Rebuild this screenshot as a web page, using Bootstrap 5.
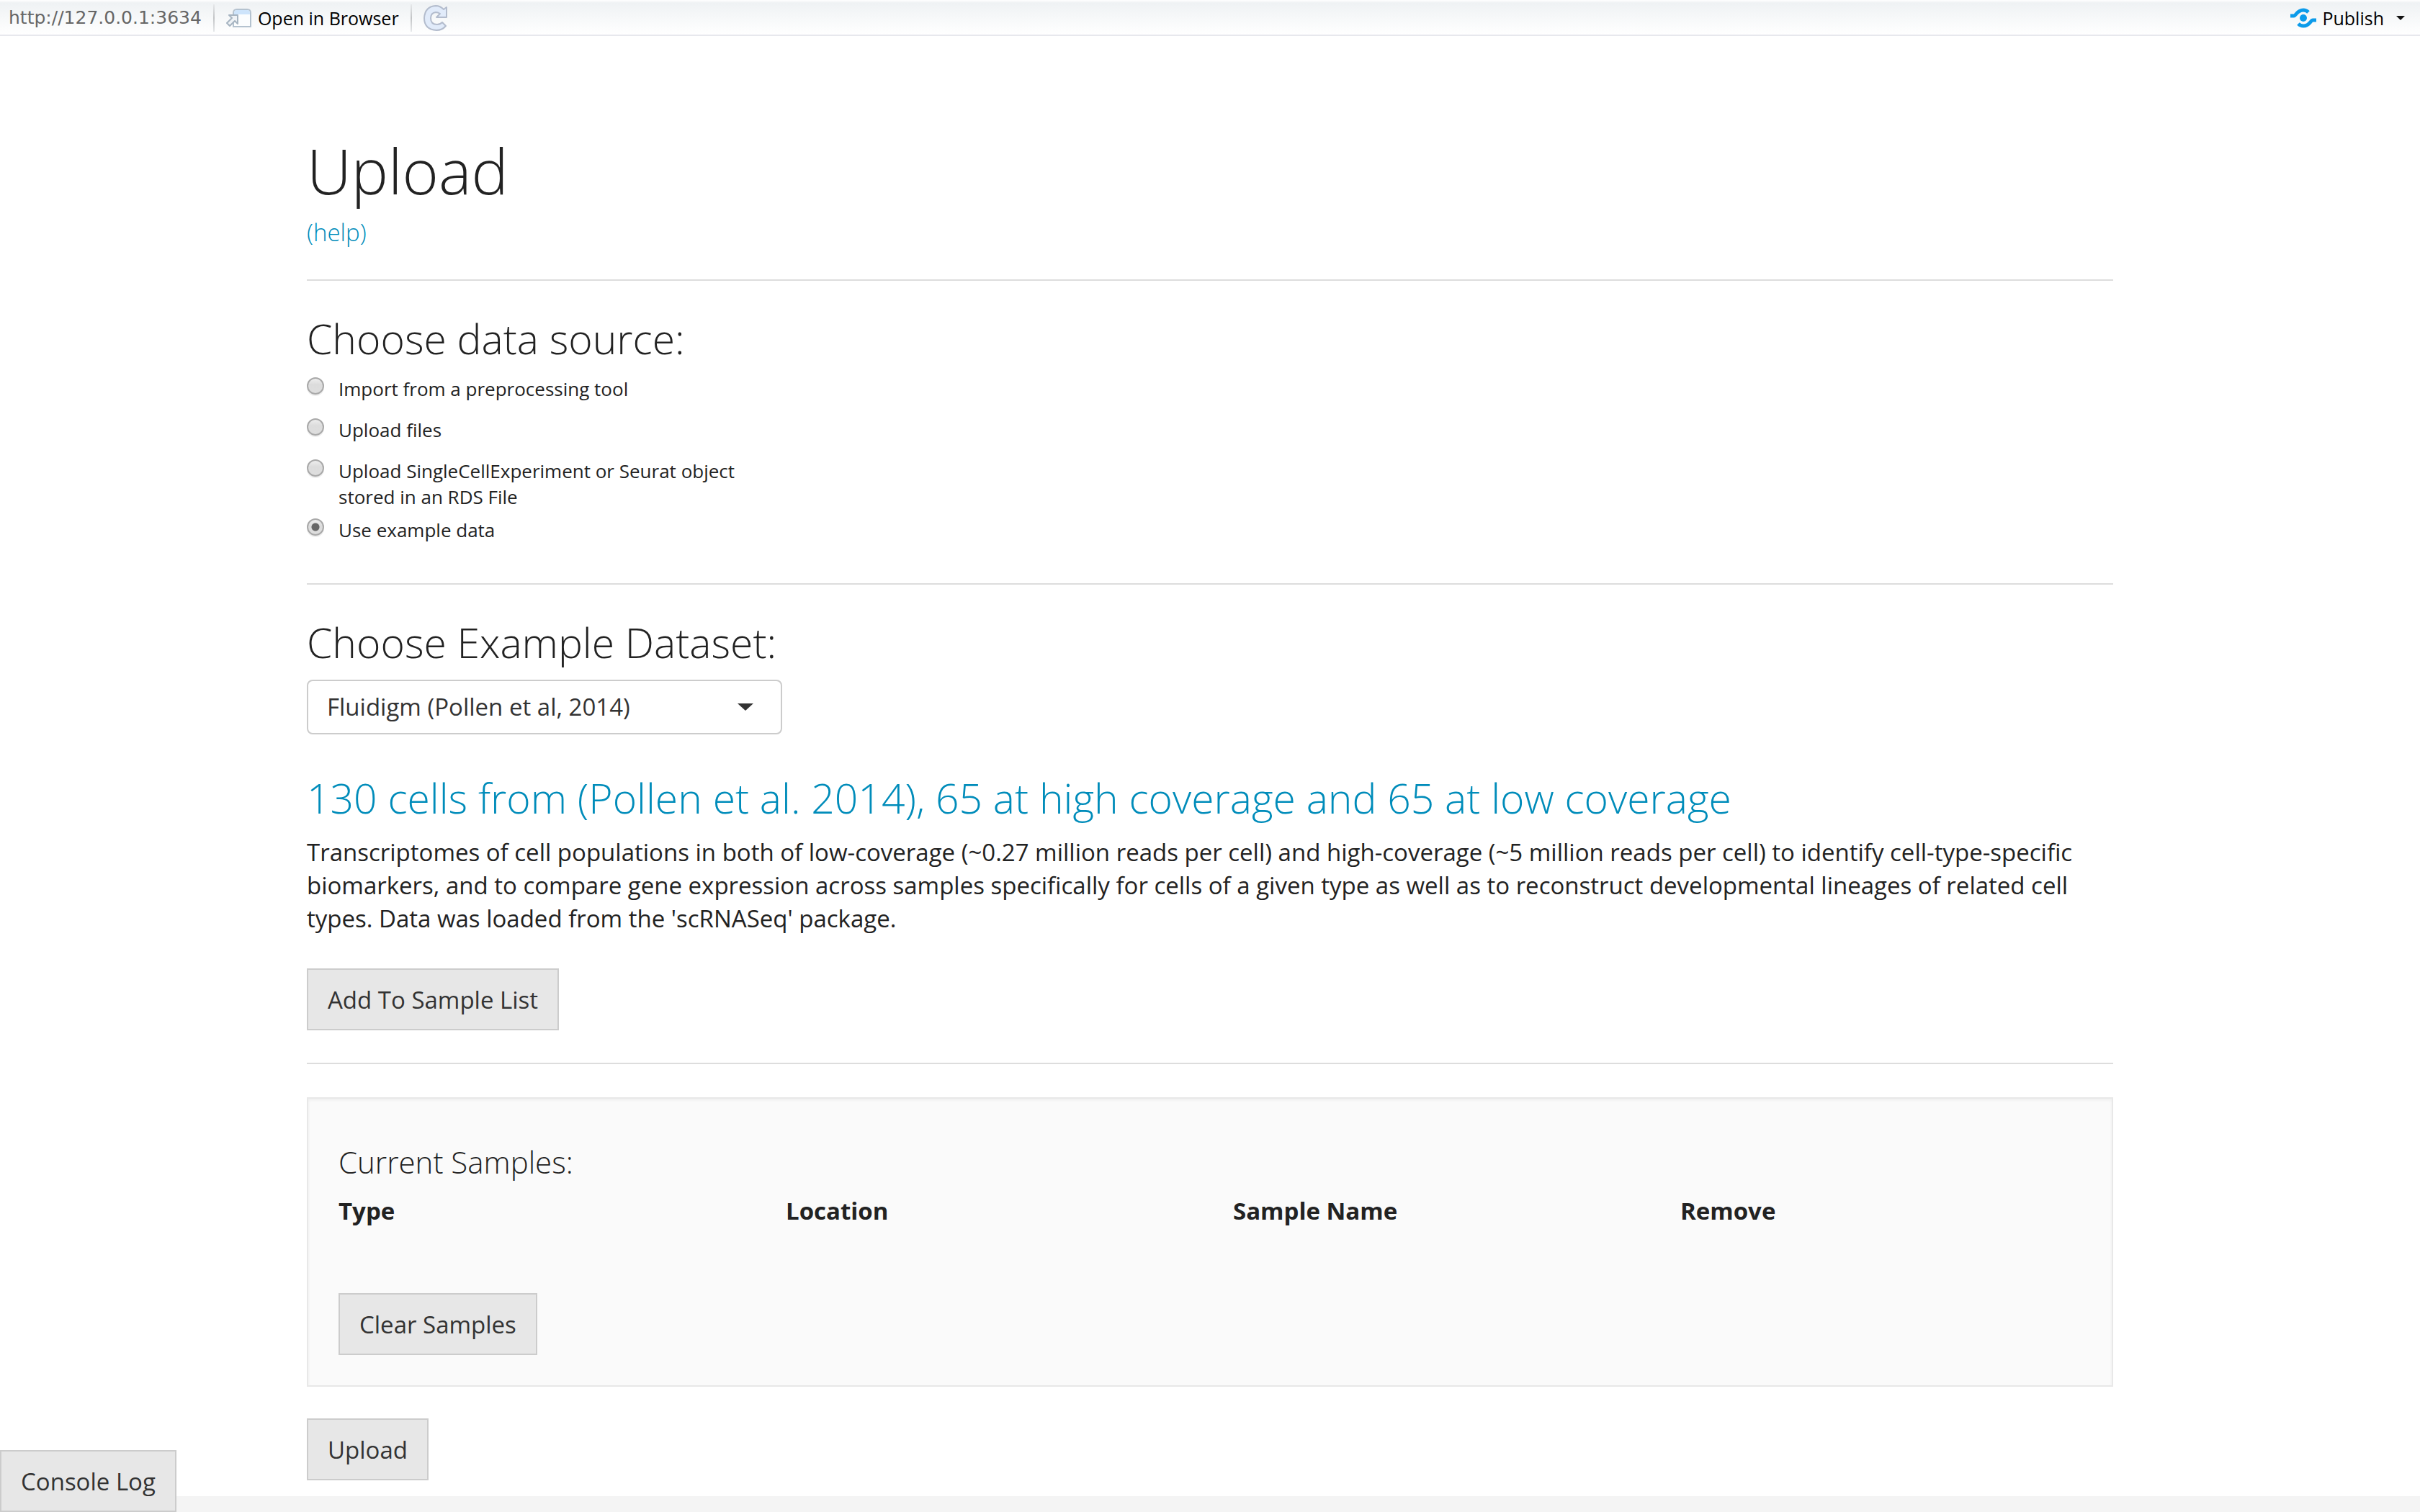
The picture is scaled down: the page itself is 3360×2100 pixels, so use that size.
<!DOCTYPE html>
<html lang="en">
<head>
<meta charset="utf-8">
<meta name="viewport" content="width=device-width, initial-scale=1">
<title>Upload</title>
<link href="https://cdn.jsdelivr.net/npm/bootstrap@5.3.0/dist/css/bootstrap.min.css" rel="stylesheet">
<style>
body { font-family: "Open Sans", "Noto Sans", sans-serif; font-size: 33px; line-height: 46px; color: #222; background: #fff; }
a { color: #008cba; text-decoration: none; }
h1, h3, h4 { font-weight: 300; margin: 0; }
h1 { font-size: 86px; line-height: 94px; margin-bottom: 19px; }
h3 { font-size: 57px; line-height: 62px; padding-top: 3px; margin-bottom: 21px; }
h4 { font-size: 42px; line-height: 46px; }
hr { margin: 45px 0 46px; border: 0; border-top: 2px solid #ddd; opacity: 1; }
.viewer-bar { height: 50px; padding-top: 2px; font-size: 25px; line-height: 32px; color: #000; border-bottom: 2px solid #e7e8ed; background: linear-gradient(#fff 0, #eff2f4 4px, #fff 48px); }
.viewer-bar button { font-weight: 500; color: #000; background: none; border: 0; padding: 0; }
.viewer-url { font-family: "DejaVu Sans", sans-serif; color: #666; }
.divider { width: 2px; height: 38px; background: linear-gradient(#e6e8ea, #c2c4c6, #e6e8ea); }
.page-box { max-width: 2572px; padding: 140px 32px 44px; margin: 0 auto; }
.help-line { font-weight: 300; line-height: 40px; }
.source-list { max-width: 660px; font-size: 26px; line-height: 36px; }
.source-item { display: flex; gap: 20px; min-height: 47px; margin-bottom: 10px; }
.source-item input { appearance: none; flex: none; width: 24px; height: 24px; margin: 2px 0 0; border: 2px solid #a9a9a9; border-radius: 50%; background: linear-gradient(#eee, #dcdcdc 40%, #dedede); box-shadow: 0 2px 0 #eee; }
.source-item input:checked { background: radial-gradient(circle, #666 0 5px, transparent 6px), linear-gradient(#eee, #dcdcdc 40%, #dedede); }
.dataset-select { width: 660px; max-width: 100%; height: 76px; padding: 0 80px 0 26px; font-size: 33px; line-height: 46px; color: #333; border: 2px solid #ccc; border-radius: 8px; background: #fff url("data:image/svg+xml,%3Csvg xmlns='http://www.w3.org/2000/svg' viewBox='0 0 22 10'%3E%3Cpath fill='%23333' d='M0 0h22L11 10z'/%3E%3C/svg%3E") no-repeat right 38px center / 22px 10px; }
.dataset-title { margin-top: 54px; margin-bottom: 22px; }
.dataset-text { margin-bottom: 46px; }
.btn-flat { font-size: 33px; line-height: 46px; padding: 19px 27px 17px; color: #333; background: #e7e7e7; border: 2px solid #ccc; border-radius: 0; }
.btn-console { z-index: 1040; }
.well-box { padding: 65px 42px 42px; background: #fafafa; border: 2px solid #e8e8e8; box-shadow: inset 0 2px 4px rgba(0,0,0,.05); margin-bottom: 44px; }
.sample-grid { margin: 22px -32px 91px; }
.sample-grid table { width: 100%; table-layout: fixed; }
.sample-grid th { padding: 0 32px; font-weight: 700; }
.page-foot { height: 22px; background: #f4f4f4; }
</style>
</head>
<body>
<header class="viewer-bar d-flex align-items-center px-1">
  <span class="viewer-url ms-2">http://127.0.0.1:3634</span>
  <span class="divider ms-3"></span>
  <button type="button" class="d-flex align-items-center ms-3">
    <svg class="me-2" width="36" height="28" viewBox="0 0 36 28" aria-hidden="true"><path d="M10 26V7q0-5 5-5h14q5 0 5 5v19z" fill="#fbfdfe" stroke="#b4c2cf" stroke-width="2"/><path d="M11 9V7q0-4 4-4h14q4 0 4 4v2z" fill="#cde4fb"/><path d="M4 10h12v12l-4-4-7 7-4-4 7-7z" fill="#eef2f6" stroke="#a6b4c1" stroke-width="2" stroke-linejoin="round"/></svg>
    Open in Browser
  </button>
  <span class="divider ms-3"></span>
  <button type="button" class="d-flex ms-3" aria-label="Refresh">
    <svg width="34" height="36" viewBox="0 0 34 36" aria-hidden="true"><path d="M32 3v14H18l5-5Q20 10 17 10q-7 1-7 8 0 9 9 9 4 0 7-3l5 5q-5 6-13 6Q1 34 1 18 2 2 17 1q6 0 11 5z" fill="#e1ebfa" stroke="#b3bccd" stroke-width="2" stroke-linejoin="round"/></svg>
  </button>
  <button type="button" class="d-flex align-items-center ms-auto me-3">
    <svg class="me-2" width="36" height="28" viewBox="0 0 36 28" aria-hidden="true"><circle cx="18" cy="14" r="5" fill="#0c9bea"/><path d="M0 11h5c3 0 4-8 13-8 3 0 5 1 7 3M36 17h-5c-3 0-4 8-13 8-3 0-5-1-7-3" fill="none" stroke="#0c9bea" stroke-width="5"/></svg>
    Publish
    <svg class="ms-3" width="14" height="8" viewBox="0 0 14 8" aria-hidden="true"><path d="M1 1h12L7 7z" fill="#111"/></svg>
  </button>
</header>

<main class="page-box">
  <h1>Upload</h1>
  <div class="help-line"><a href="#">(help)</a></div>
  <hr>

  <h3 id="source-title">Choose data source:</h3>
  <div class="source-list" role="radiogroup" aria-labelledby="source-title">
    <div class="source-item"><input type="radio" name="source" id="src-import"><label for="src-import">Import from a preprocessing tool</label></div>
    <div class="source-item"><input type="radio" name="source" id="src-files"><label for="src-files">Upload files</label></div>
    <div class="source-item"><input type="radio" name="source" id="src-rds"><label for="src-rds">Upload SingleCellExperiment or Seurat object stored in an RDS File</label></div>
    <div class="source-item mb-0"><input type="radio" name="source" id="src-example" checked><label for="src-example">Use example data</label></div>
  </div>
  <hr>

  <h3><label for="dataset">Choose Example Dataset:</label></h3>
  <select id="dataset" class="form-select dataset-select"><option>Fluidigm (Pollen et al, 2014)</option></select>

  <h3 class="dataset-title"><a href="#">130 cells from (Pollen et al. 2014), 65 at high coverage and 65 at low coverage</a></h3>
  <p class="dataset-text">Transcriptomes of cell populations in both of low-coverage (~0.27 million reads per cell) and high-coverage (~5 million reads per cell) to identify cell-type-specific biomarkers, and to compare gene expression across samples specifically for cells of a given type as well as to reconstruct developmental lineages of related cell types. Data was loaded from the 'scRNASeq' package.</p>
  <button type="button" class="btn btn-flat d-block">Add To Sample List</button>
  <hr>

  <section class="well-box">
    <h4>Current Samples:</h4>
    <div class="sample-grid">
      <table><thead><tr><th scope="col">Type</th><th scope="col">Location</th><th scope="col">Sample Name</th><th scope="col">Remove</th></tr></thead></table>
    </div>
    <button type="button" class="btn btn-flat d-block">Clear Samples</button>
  </section>
  <button type="button" class="btn btn-flat d-block">Upload</button>
</main>

<div class="page-foot fixed-bottom"></div>
<button type="button" class="btn btn-flat btn-console position-fixed bottom-0 start-0">Console Log</button>
<script src="https://cdn.jsdelivr.net/npm/bootstrap@5.3.0/dist/js/bootstrap.bundle.min.js"></script>
</body>
</html>
